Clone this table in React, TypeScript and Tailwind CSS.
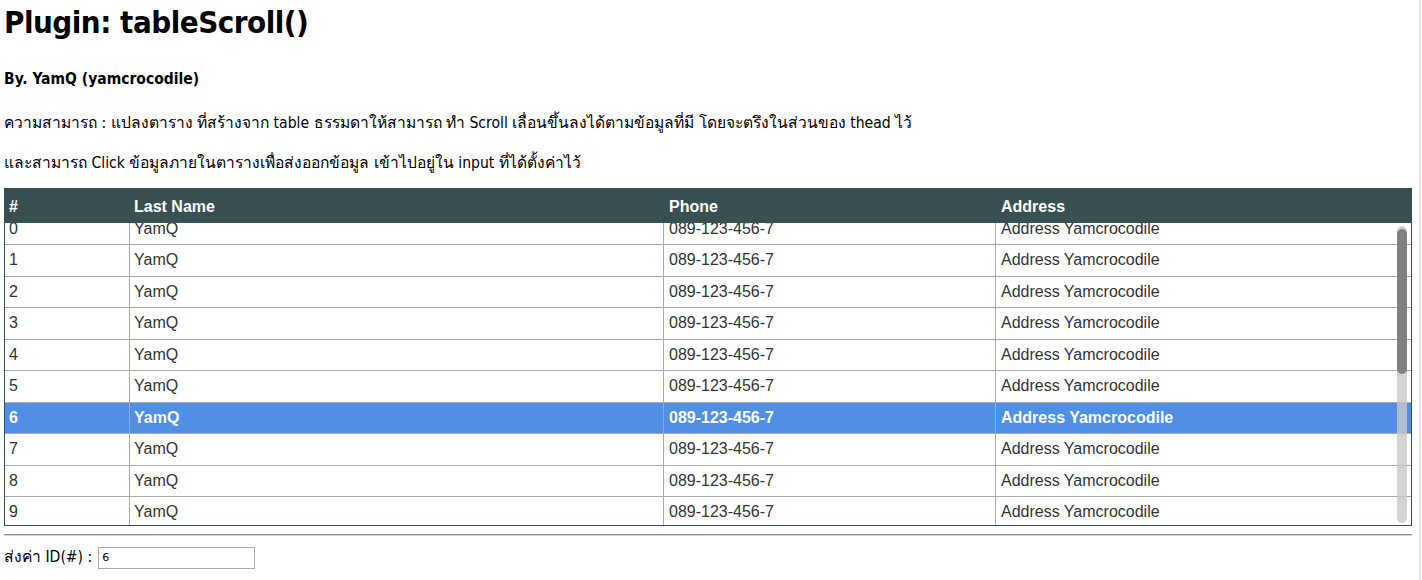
import React from "react";

const ROWS = Array.from({ length: 20 }, (_, i) => i);
const SELECTED = 6;

export default function App() {
  return (
    <div className="flex min-h-[580px] bg-white font-['DejaVu_Sans_Condensed','DejaVu_Sans',sans-serif] text-black">
      <div className="flex-1 pl-[4px] pr-[6px]">
        {/* heading */}
        <h1 className="pt-[2px] text-[31px] font-bold leading-[40px] tracking-[-0.5px]">
          Plugin: tableScroll()
        </h1>
        <h4 className="mt-[27px] text-[15.5px] font-bold leading-[20px]">
          By. YamQ (yamcrocodile)
        </h4>
        <p className="mt-[24px] text-[15.6px] leading-[20px]">
          ความสามารถ : แปลงตาราง ที่สร้างจาก table ธรรมดาให้สามารถ ทำ Scroll เลื่อนขึ้นลงได้ตามข้อมูลที่มี โดยจะตรึงในส่วนของ thead ไว้
        </p>
        <p className="mt-[20px] text-[15.6px] leading-[20px]">
          และสามารถ Click ข้อมูลภายในตารางเพื่อส่งออกข้อมูล เข้าไปอยู่ใน input ที่ได้ตั้งค่าไว้
        </p>

        {/* table */}
        <div className="mt-[15px] w-[1408px] border-x border-b border-[#37504f] text-[16px] font-['Liberation_Sans',Helvetica,Arial,sans-serif]">
          <div className="grid h-[35px] grid-cols-[125px_534px_332px_1fr] items-center bg-[#38504f] pt-[3px] font-bold text-white">
            <div className="pl-[4px]">#</div>
            <div className="pl-[4px]">Last Name</div>
            <div className="pl-[5px]">Phone</div>
            <div className="pl-[5px]">Address</div>
          </div>
          <div className="relative h-[302px] overflow-hidden">
            <div className="-mt-[9.5px]">
              {ROWS.map((i) => {
                const sel = i === SELECTED;
                return (
                  <div
                    key={i}
                    className={
                      sel
                        ? "grid h-[31.5px] grid-cols-[125px_534px_332px_1fr] items-center border-b border-[#a9a9a9] bg-[#4f8fe6] font-bold text-white"
                        : "grid h-[31.5px] grid-cols-[125px_534px_332px_1fr] items-center border-b border-[#a9a9a9] text-[#333]"
                    }
                  >
                    <div className="flex h-full items-center border-r border-[#a9a9a9] pl-[4px]">{i}</div>
                    <div className="flex h-full items-center border-r border-[#a9a9a9] pl-[4px]">YamQ</div>
                    <div className="flex h-full items-center border-r border-[#a9a9a9] pl-[5px]">089-123-456-7</div>
                    <div className="flex h-full items-center pl-[5px]">Address Yamcrocodile</div>
                  </div>
                );
              })}
            </div>
            {/* overlay scrollbar */}
            <div className="absolute right-[4px] top-[3px] h-[297px] w-[10px] rounded-full bg-[#c8c8c8]/80">
              <div className="mt-[3px] h-[145px] w-[10px] rounded-full bg-[#808080]" />
            </div>
          </div>
        </div>

        <hr className="mt-[8px] w-[1408px] border-t border-b border-t-[#8c8c8c] border-b-[#d8d8d8]" />

        <div className="mt-[10px] flex items-center text-[15.6px]">
          <label className="mr-[6px]">ส่งค่า ID(#) :</label>
          <input
            readOnly
            value="6"
            className="h-[22px] w-[157px] border border-[#aaa] px-[3px] font-['DejaVu_Sans',sans-serif] text-[11px] outline-none"
          />
        </div>
      </div>
      <div className="w-[2px] bg-[#e6e6e6]" />
      <div className="w-[1px] bg-white" />
    </div>
  );
}
